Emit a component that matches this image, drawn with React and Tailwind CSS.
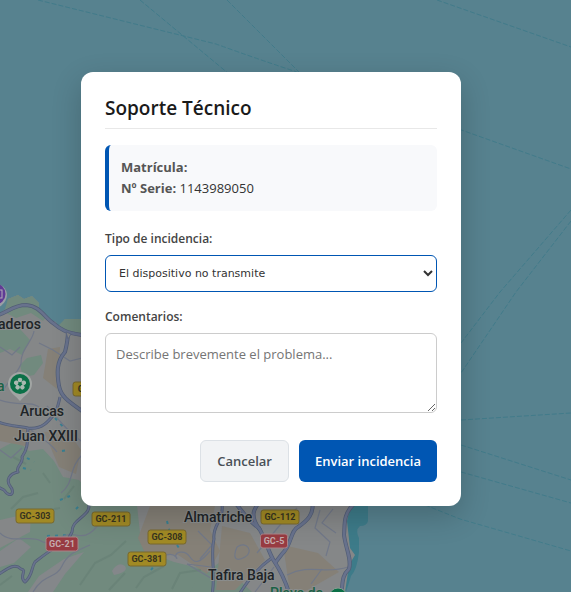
import { useState } from "react";

const ROADS = [
  { w: 4, d: "M-4 316 C8 312 14 305 26 305 C40 306 44 317 53 323 C60 329 66 333 82 335" },
  { w: 4, d: "M68 331 C68 338 67 344 65 352 C56 362 57 374 59 386 C61 396 66 400 85 413" },
  { w: 3, d: "M-4 421 C6 426 18 426 28 428 C42 430 49 421 55 413 C58 407 59 402 60 397" },
  { w: 3, d: "M28 428 C27 440 29 447 22 457 C24 464 15 466 18 472 C9 474 6 480 10 486 C16 493 10 499 4 490 L-4 486" },
  { w: 3, d: "M-4 576 C6 570 14 562 21 569 C28 570 18 577 25 582 C33 575 31 568 35 562 C44 555 49 551 55 548 C67 544 69 538 72 532 C72 522 80 520 86 513 C92 508 86 501 92 499" },
  { w: 4, d: "M233 500 C243 512 249 522 259 528 C266 540 268 551 274 561 C280 570 286 582 290 596" },
  { w: 4, d: "M264 496 C253 509 249 515 260 530" },
  { w: 4, d: "M312 500 C315 514 307 521 298 527 C290 531 292 545 282 554 L275 563" },
  { w: 3, d: "M273 557 C256 569 247 582 238 596" },
  { w: 4, d: "M353 505 C343 515 345 524 344 535 C346 550 352 559 349 569 C341 576 343 585 341 596" },
  { w: 3, d: "M222 504 C224 521 212 525 214 539 C210 555 216 572 212 596" },
];

const MINOR_ROADS = [
  "M34 331 C33 341 20 350 21 364 C16 376 9 379 3 391",
  "M39 343 L53 350 L70 361 L82 358",
  "M0 347 L12 355 L20 347 M0 400 C20 407 34 400 41 409",
  "M28 427 C37 437 49 440 57 452 M47 406 C62 423 67 431 81 441",
  "M82 455 C68 469 75 482 61 493 M0 450 L11 458 L22 448",
  "M0 533 C11 545 31 534 41 541 S61 531 76 535 S97 525 104 518",
  "M33 592 C44 573 56 579 62 566 S77 551 90 545",
  "M166 555 C177 552 178 562 176 557 S185 549 190 557 S201 562 210 551",
  "M200 559 L212 545 L198 531 M214 580 L187 564 L211 567",
  "M237 547 C247 540 254 552 245 557 S232 559 237 547",
  "M257 553 L280 525 L297 508 M287 575 C311 563 324 575 348 567",
  "M320 510 L315 528 L330 542 L326 556 M311 584 L322 569",
  "M333 509 L322 523 L336 533 M274 567 L255 592",
];

const SHIPPING_LANES = [
  "M38 0 L216 44 Q260 60 318 79 L571 169",
  "M140 0 L235 79",
  "M227 0 L306 79",
  "M437 0 L571 47",
  "M571 210 L500 292 L461 343",
  "M571 221 L516 292 L461 373",
  "M461 420 L571 413",
  "M461 445 L571 480",
  "M461 472 L571 503",
  "M425 505 L460 519 L571 551",
];

const SHIELDS = [
  { label: "GC-303", x: 35, y: 516, w: 38 },
  { label: "GC-211", x: 111, y: 519, w: 38 },
  { label: "GC-308", x: 167, y: 537, w: 38 },
  { label: "GC-381", x: 147, y: 559, w: 38 },
  { label: "GC-112", x: 280, y: 517, w: 38 },
  { label: "GC-2", x: 88, y: 389, w: 30 },
  { label: "GC-21", x: 62, y: 544, w: 32, red: true },
  { label: "GC-5", x: 274, y: 541, w: 27, red: true },
];

const PLACES = [
  { name: "aderos", x: -2, y: 329 },
  { name: "Arucas", x: 20, y: 416 },
  { name: "Juan XXIII", x: 14, y: 441 },
  { name: "Almatriche", x: 184, y: 522 },
  { name: "Tafira Baja", x: 208, y: 580 },
];

const ISSUE_TYPES = [
  "El dispositivo no transmite",
  "Posición incorrecta",
  "Otro",
];

const Flower = ({ x, y }) => (
  <g transform={`translate(${x} ${y})`}>
    <path
      d="M0 17 C-4 12 -12 8 -12 0 A12 12 0 0 1 12 0 C12 8 4 12 0 17Z"
      fill="#a1a5a3"
    />
    <circle r="10" fill="#0b7047" />
    {[0, 72, 144, 216, 288].map((angle) => (
      <circle
        key={angle}
        cy="-4"
        r="2.3"
        fill="#a9b9b0"
        transform={`rotate(${angle})`}
      />
    ))}
    <circle r="1.2" fill="#0b7047" />
  </g>
);

const MapBackground = () => (
  <svg
    className="absolute inset-0 h-full w-full"
    viewBox="0 0 571 592"
    preserveAspectRatio="xMidYMid slice"
    aria-hidden="true"
  >
    <rect width="571" height="592" fill="#57828f" />

    {/* shallow water */}
    <path
      d="M340 500 L368 500 L368 521 Q367 526 360 526 Q355 530 359 538 L359 552 Q357 570 351 576 L346 592 H335Z"
      fill="#3d7b89"
    />

    {/* land */}
    <path
      d="M0 313 L7 308 L8 299 L18 295 L24 299 L32 296 L39 303 L39 309 L46 315 L48 320 L56 322 L58 328 L65 319 L74 321 L82 319 L110 340 L340 420 L352 500 L347 521 L350 548 L355 555 L349 565 L345 592 H0Z"
      fill="#858788"
    />
    <g fill="#718a7e">
      <path d="M4 312 L8 299 L18 295 L24 299 L32 296 L39 303 L39 309 L47 316 L43 321 L31 313 L16 318Z" />
      <path d="M57 327 L65 319 L82 319 V333 L66 332Z" />
      <path d="M2 326 L20 329 L30 340 L22 355 L10 349 L0 353 V329Z" />
      <path d="M27 358 L41 355 L43 363 L34 375 L23 377 L20 365Z" />
      <path d="M0 449 L17 440 L29 451 L43 449 L54 461 L63 477 L79 480 L96 500 L137 505 L140 533 L150 553 L174 562 L207 570 L217 592 H0 V548 L30 532 L31 511 L0 507Z" />
      <path d="M0 482 L12 493 L35 490 L22 515 L0 520Z" />
      <path d="M196 581 L220 562 L252 592 H190Z" />
    </g>
    <g fill="#858077">
      <path d="M48 349 L60 347 L57 389 L43 378Z" />
      <path d="M44 432 L67 430 L81 450 L76 474 L59 467Z" />
      <path d="M150 506 H215 L210 530 L220 551 L207 574 L178 555 L145 553 L138 538Z" />
      <path d="M222 526 L250 533 L265 560 L235 590 H216Z" />
      <path d="M283 545 L318 553 L339 572 L304 592 H290Z" />
      <path d="M0 424 L33 431 L25 446 L0 441Z" />
    </g>
    <g fill="#84878a">
      <path d="M0 551 L19 538 L31 547 L14 563 L0 567Z" />
      <path d="M112 571 Q118 561 125 566 Q129 572 114 575Z" />
      <path d="M28 592 L39 576 L64 559 L84 552 L65 574 L53 592Z" />
    </g>

    {/* terrain shading */}
    <g fill="none" stroke="#647d72" strokeWidth="2" opacity=".55">
      <path d="M11 509 L23 497 L38 493 M26 521 L44 511 L60 508 M64 499 L74 486 M80 585 L95 563 L111 555 L126 541 M109 590 L125 573 M136 588 L144 577 L164 566 M172 589 L180 573 L201 570 M0 585 L12 576 M13 457 L26 464 M43 473 L50 483" />
    </g>

    {/* ponds */}
    <g fill="none" stroke="#397f91" strokeWidth="2" strokeDasharray="3 5">
      <path d="M55 418 L66 430 M62 451 L69 450 M27 458 L34 462 M23 468 L31 470 M60 500 L70 496 M47 536 L70 535 M76 509 L81 504 M151 570 L157 562 M167 521 L170 533 M177 545 L179 548" />
    </g>

    <g fill="none" stroke="#717888" strokeWidth="1.2">
      {MINOR_ROADS.map((d) => (
        <path key={d} d={d} />
      ))}
    </g>
    <g fill="none" strokeLinejoin="round">
      {ROADS.map((road) => (
        <path key={road.d} d={road.d} stroke="#525e76" strokeWidth={road.w} />
      ))}
      {ROADS.map((road) => (
        <path
          key={road.d}
          d={road.d}
          stroke="#68728d"
          strokeWidth={road.w - 1.4}
        />
      ))}
    </g>
    <path d="M66 332 L71 334 L68 339Z" fill="#858788" stroke="#606a82" />

    <g
      fill="none"
      stroke="#3d7a8a"
      strokeWidth="1"
      strokeDasharray="5 2"
      opacity=".8"
    >
      {SHIPPING_LANES.map((d) => (
        <path key={d} d={d} />
      ))}
    </g>

    <g className="font-['Roboto',sans-serif]" textAnchor="middle">
      {SHIELDS.map((s) => (
        <g key={s.label}>
          <rect
            x={s.x - s.w / 2}
            y={s.y - 7}
            width={s.w}
            height="14"
            rx="2.5"
            fill={s.red ? "#983b42" : "#a18a24"}
            stroke={s.red ? "#aa8388" : "#78682e"}
          />
          <text
            x={s.x}
            y={s.y + 3}
            fontSize="9"
            fontWeight="700"
            fill={s.red ? "#c4acae" : "#37341f"}
          >
            {s.label}
          </text>
        </g>
      ))}
    </g>

    <g
      className="font-['Roboto',sans-serif]"
      fontSize="14"
      fontWeight="500"
      fill="#202427"
      stroke="#8a8d8d"
      strokeWidth="2"
      paintOrder="stroke"
    >
      {PLACES.map((p) => (
        <text key={p.name} x={p.x} y={p.y}>
          {p.name}
        </text>
      ))}
      <text x="-3" y="391" fill="#1b6145">
        a
      </text>
      <text x="270" y="598" fill="#1b6145">
        Playa de
      </text>
    </g>

    <Flower x={20} y={384} />
    <circle cx="338" cy="597" r="9" fill="#0b7047" stroke="#899b92" />
    <path
      d="M-2 308 C4 304 7 300 7 294 A12 12 0 0 0 -12 286Z"
      fill="#9b9ea6"
    />
    <circle cx="-5" cy="294" r="10.5" fill="#603b95" />
    <rect x="-3" y="290" width="5" height="8" fill="none" stroke="#b2aebb" />
  </svg>
);

const InfoRow = ({ label, value }) => (
  <p>
    <strong className="font-bold text-[#555]">{label}</strong> {value}
  </p>
);

const App = () => {
  const [issueType, setIssueType] = useState(ISSUE_TYPES[0]);
  const [comments, setComments] = useState("");

  return (
    <div className="relative flex min-h-screen items-center justify-center overflow-hidden pr-[29px] pb-[14px] font-['Segoe_UI','Open_Sans',sans-serif] text-[#333]">
      <MapBackground />

      <form
        role="dialog"
        aria-labelledby="support-title"
        onSubmit={(e) => e.preventDefault()}
        className="relative w-full max-w-[380px] rounded-xl bg-white p-6 shadow-[0_10px_30px_rgba(0,0,0,0.2)]"
      >
        <h2
          id="support-title"
          className="mb-4 border-b border-[#e8e8e8] pb-2 text-[19px] leading-6 font-semibold text-[#1a1a1a]"
        >
          Soporte Técnico
        </h2>

        <div className="mb-[18px] rounded-md border-l-4 border-[#0056b3] bg-[#f8f9fb] p-3 text-[13px] leading-[21px]">
          <InfoRow label="Matrícula:" value="" />
          <InfoRow label="Nº Serie:" value="1143989050" />
        </div>

        <label
          htmlFor="issue-type"
          className="mb-1.5 block text-xs leading-5 font-semibold text-[#444]"
        >
          Tipo de incidencia:
        </label>
        <select
          id="issue-type"
          value={issueType}
          onChange={(e) => setIssueType(e.target.value)}
          className="mb-[15px] block h-[37px] w-full rounded-md border border-[#0056b3] bg-white px-[9px] font-['DejaVu_Sans',sans-serif] text-[11px] text-[#333] outline-none"
        >
          {ISSUE_TYPES.map((type) => (
            <option key={type}>{type}</option>
          ))}
        </select>

        <label
          htmlFor="comments"
          className="mb-1.5 block text-xs leading-5 font-semibold text-[#444]"
        >
          Comentarios:
        </label>
        <textarea
          id="comments"
          value={comments}
          onChange={(e) => setComments(e.target.value)}
          placeholder="Describe brevemente el problema..."
          className="mb-[27px] block h-20 w-full resize-y rounded-md border border-[#ccc] bg-white p-2.5 text-[13px] leading-5 outline-none placeholder:text-[#757575]"
        />

        <div className="flex justify-end gap-2.5 text-[13px] leading-5 font-semibold">
          <button
            type="button"
            className="rounded-md border border-[#dce1e6] bg-[#f1f3f5] px-4 py-2.5 text-[#495057]"
          >
            Cancelar
          </button>
          <button
            type="submit"
            className="rounded-md bg-[#0056b3] px-4 py-2.5 text-white"
          >
            Enviar incidencia
          </button>
        </div>
      </form>
    </div>
  );
};

export default App;
